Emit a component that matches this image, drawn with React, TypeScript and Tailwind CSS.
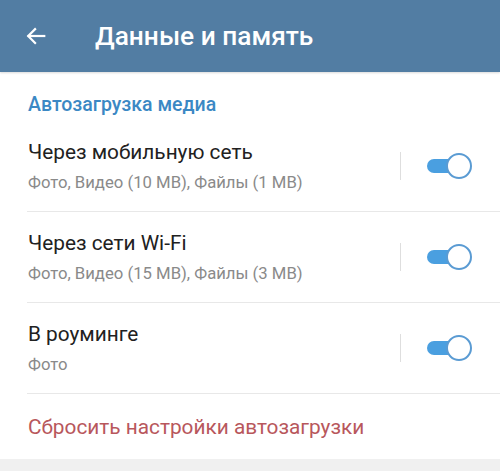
import React from "react";

function Toggle() {
  return (
    <div className="relative w-[45px] h-[26px] shrink-0">
      <div className="absolute left-0 top-[6px] w-[34px] h-[14px] rounded-full bg-[#4a9fe0]" />
      <div className="absolute left-[19px] top-0 w-[26px] h-[26px] rounded-full bg-white border-2 border-[#5a9bd3]" />
    </div>
  );
}

function Row({ title, sub }: { title: string; sub: string }) {
  return (
    <div className="ml-[27px] h-[91px] flex items-center border-b border-[#e8e8e8] pr-[28px]">
      <div className="flex-1 pl-[1px]">
        <div className="text-[20.8px] leading-[28px] text-[#212121]">{title}</div>
        <div className="mt-[6px] text-[16.7px] leading-[22px] text-[#8a8a8a]">{sub}</div>
      </div>
      <div className="w-[1px] h-[28px] bg-[#dedede] mr-[26px]" />
      <Toggle />
    </div>
  );
}

export default function App() {
  return (
    <div
      className="w-[500px] h-[471px] flex flex-col bg-white overflow-hidden"
      style={{ fontFamily: "Roboto, 'Noto Sans', sans-serif" }}
    >
      <div className="h-[72px] shrink-0 bg-[#527da3] flex items-center shadow-[0_1px_2px_rgba(0,0,0,0.15)]">
        <div className="w-[95px] pl-[25px] flex items-center">
          <svg width="22" height="22" viewBox="0 0 24 24" fill="none" stroke="white" strokeWidth="2.4" strokeLinecap="square">
            <path d="M21 12H4" />
            <path d="M11 4.5L3.5 12l7.5 7.5" />
          </svg>
        </div>
        <div className="text-[26.3px] font-medium text-white leading-[30px]">Данные и память</div>
      </div>
      <div className="pt-[22px] pb-[5px] pl-[28px] text-[19.5px] font-medium leading-[22px] text-[#3b88c4]">
        Автозагрузка медиа
      </div>
      <Row title="Через мобильную сеть" sub="Фото, Видео (10 MB), Файлы (1 MB)" />
      <Row title="Через сети Wi-Fi" sub="Фото, Видео (15 MB), Файлы (3 MB)" />
      <Row title="В роуминге" sub="Фото" />
      <div className="ml-[27px] h-[65px] flex items-center pl-[1px] text-[20.8px] leading-[28px] text-[#b8575c]">
        Сбросить настройки автозагрузки
      </div>
      <div className="flex-1 bg-[#f0f0f0]" />
    </div>
  );
}
